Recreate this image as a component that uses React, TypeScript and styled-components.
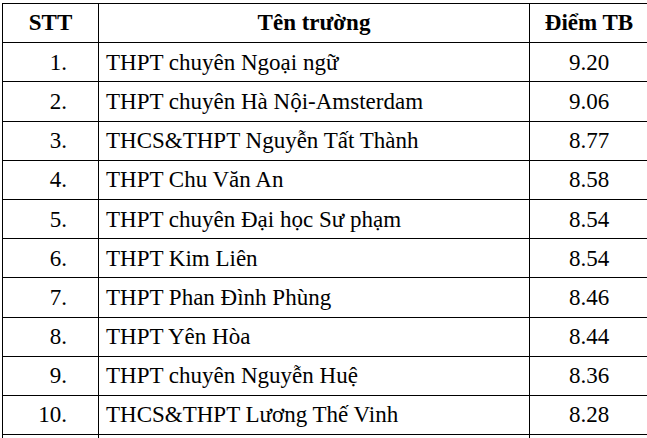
import styled, { createGlobalStyle } from 'styled-components';

const GlobalStyle = createGlobalStyle`
	html, body {
		margin: 0;
		padding: 0;
		background: #ffffff;
		overflow: hidden;
	}
	body {
		font-family: 'Liberation Serif', 'Times New Roman', serif;
		color: #000;
	}
`;

type School = { name: string; score: string };

const schools: School[] = [
	{ name: 'THPT chuyên Ngoại ngữ', score: '9.20' },
	{ name: 'THPT chuyên Hà Nội-Amsterdam', score: '9.06' },
	{ name: 'THCS&THPT Nguyễn Tất Thành', score: '8.77' },
	{ name: 'THPT Chu Văn An', score: '8.58' },
	{ name: 'THPT chuyên Đại học Sư phạm', score: '8.54' },
	{ name: 'THPT Kim Liên', score: '8.54' },
	{ name: 'THPT Phan Đình Phùng', score: '8.46' },
	{ name: 'THPT Yên Hòa', score: '8.44' },
	{ name: 'THPT chuyên Nguyễn Huệ', score: '8.36' },
	{ name: 'THCS&THPT Lương Thế Vinh', score: '8.28' },
];

const Page = styled.div`
	height: 438px;
	overflow: hidden;
	padding: 3px 0 0 2px;
	box-sizing: border-box;
`;

const Table = styled.table`
	border-collapse: collapse;
	table-layout: fixed;
	width: 644px;
	font-family: 'Liberation Serif', 'Times New Roman', serif;
	font-size: 23px;
	line-height: 1;
	color: #000;
`;

const Row = styled.tr`
	height: 39.2px;
`;

const HeadCell = styled.th<{ $width: number }>`
	width: ${(p) => p.$width}px;
	border: 1px solid #000;
	font-weight: bold;
	text-align: center;
	padding: 0 0 2px;
	vertical-align: middle;
`;

const Cell = styled.td<{ $align: 'left' | 'center' | 'right' }>`
	border: 1px solid #000;
	text-align: ${(p) => p.$align};
	vertical-align: middle;
	padding: 0 ${(p) => (p.$align === 'right' ? '31px' : '0')} 0
		${(p) => (p.$align === 'left' ? '7px' : '0')};
	white-space: nowrap;
`;

export default function App() {
	return (
		<>
			<GlobalStyle />
			<Page>
				<Table>
					<thead>
						<Row>
							<HeadCell $width={95}>STT</HeadCell>
							<HeadCell $width={430}>Tên trường</HeadCell>
							<HeadCell $width={118}>Điểm TB</HeadCell>
						</Row>
					</thead>
					<tbody>
						{schools.map((s, i) => (
							<Row key={s.name}>
								<Cell $align='right'>{i + 1}.</Cell>
								<Cell $align='left'>{s.name}</Cell>
								<Cell $align='center'>{s.score}</Cell>
							</Row>
						))}
						{/* the next row, cut off at the bottom edge */}
						<Row>
							<Cell $align='right' />
							<Cell $align='left' />
							<Cell $align='center' />
						</Row>
					</tbody>
				</Table>
			</Page>
		</>
	);
}
